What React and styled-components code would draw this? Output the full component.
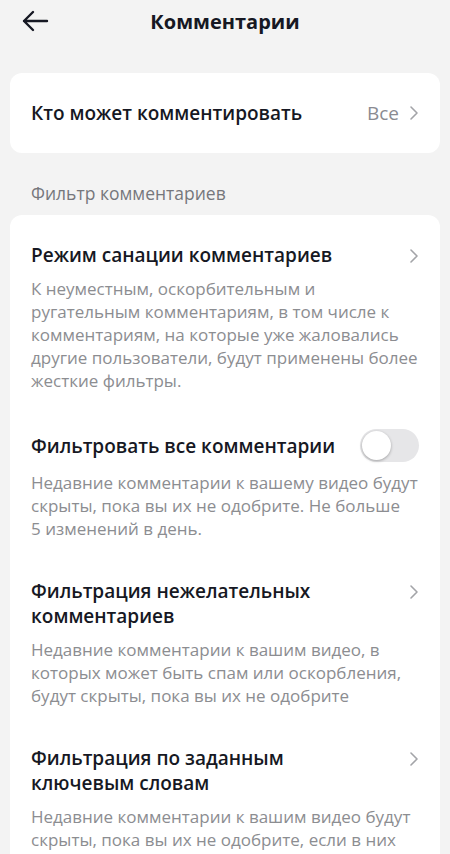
import React from 'react';
import styled, { createGlobalStyle } from 'styled-components';

const GlobalStyle = createGlobalStyle`
    body {
        margin: 0;
        background: #f3f3f3;
        font-family: 'Open Sans', 'Noto Sans', sans-serif;
        -webkit-font-smoothing: antialiased;
    }
`;

const Page = styled.div`
    width: 450px;
    height: 854px;
    background: #f3f3f3;
    overflow: hidden;
`;

const Header = styled.div`
    height: 42px;
    display: flex;
    align-items: center;
    justify-content: center;
    position: relative;
`;

const BackButton = styled.div`
    position: absolute;
    left: 20px;
    top: 8px;
    width: 30px;
    height: 26px;
    display: flex;
    align-items: center;
    justify-content: center;
`;

const Title = styled.h1`
    margin: 0;
    font-size: 20px;
    font-weight: 700;
    color: #161823;
`;

const Content = styled.div`
    padding: 31px 10px 0;
    display: flex;
    flex-direction: column;
`;

const Card = styled.div`
    background: #fff;
    border-radius: 12px;
    padding: ${props => props.padding || '0 21px'};
`;

const Row = styled.div`
    height: 80px;
    display: flex;
    align-items: center;
    justify-content: space-between;
`;

const RowLabel = styled.span`
    font-size: 19px;
    font-weight: 600;
    color: #161823;
`;

const RowValue = styled.span`
    display: flex;
    align-items: center;
    gap: 10px;
    font-size: 19px;
    color: #8a8b91;
`;

const SectionLabel = styled.div`
    padding: 28px 21px 10px;
    font-size: 17.5px;
    color: #76777c;
`;

const Item = styled.div`
    padding: 20px 0 19px;
`;

const ItemHead = styled.div`
    display: flex;
    align-items: ${props => props.center ? 'center' : 'flex-start'};
    justify-content: space-between;
    gap: 20px;
`;

const ItemTitle = styled.div`
    font-size: 19px;
    line-height: 25px;
    font-weight: 600;
    color: #161823;
    max-width: 330px;
`;

const ItemText = styled.p`
    margin: 9px 0 0;
    font-size: 17px;
    line-height: 23px;
    color: #8c8d91;
`;

const ChevronBox = styled.span`
    display: flex;
    align-items: center;
    height: 25px;
    flex-shrink: 0;
`;

const Toggle = styled.div`
    width: 59px;
    height: 33px;
    border-radius: 17px;
    background: #e6e6e8;
    flex-shrink: 0;
    position: relative;
    margin-top: -2px;
`;

const Knob = styled.div`
    position: absolute;
    left: 2px;
    top: 2px;
    width: 29px;
    height: 29px;
    border-radius: 50%;
    background: #fff;
    box-shadow: 0 1px 3px rgba(0, 0, 0, 0.3);
`;

const Chevron = () => (
    <svg width="10" height="16" viewBox="0 0 10 16" fill="none">
        <path d="M2 2l6 6-6 6" stroke="#a3a4a8" strokeWidth="1.6" strokeLinecap="round" strokeLinejoin="round" />
    </svg>
);

const items = [
    {
        title: 'Режим санации комментариев',
        text: 'К неуместным, оскорбительным и ругательным комментариям, в том числе к комментариям, на которые уже жаловались другие пользователи, будут применены более жесткие фильтры.',
    },
    {
        title: 'Фильтровать все комментарии',
        text: 'Недавние комментарии к вашему видео будут скрыты, пока вы их не одобрите. Не больше 5\u00a0изменений в день.',
        toggle: true,
    },
    {
        title: 'Фильтрация нежелательных комментариев',
        text: 'Недавние комментарии к вашим видео, в которых может быть спам или оскорбления, будут скрыты, пока вы их не одобрите',
    },
    {
        title: 'Фильтрация по заданным ключевым словам',
        text: 'Недавние комментарии к вашим видео будут скрыты, пока вы их не одобрите, если в них есть заданные вами ключевые слова.',
    },
];

const App = () => (
    <Page>
        <GlobalStyle />
        <Header>
            <BackButton>
                <svg width="28" height="22" viewBox="0 0 28 22" fill="none">
                    <path d="M26 11H3M12 2l-9 9 9 9" stroke="#161823" strokeWidth="2.4" strokeLinecap="round" strokeLinejoin="round" />
                </svg>
            </BackButton>
            <Title>Комментарии</Title>
        </Header>
        <Content>
            <Card>
                <Row>
                    <RowLabel>Кто может комментировать</RowLabel>
                    <RowValue>Все <Chevron /></RowValue>
                </Row>
            </Card>
            <SectionLabel>Фильтр комментариев</SectionLabel>
            <Card padding="8px 21px 0">
                {items.map(item => (
                    <Item key={item.title}>
                        <ItemHead center={item.toggle}>
                            <ItemTitle>{item.title}</ItemTitle>
                            {item.toggle
                                ? <Toggle><Knob /></Toggle>
                                : <ChevronBox><Chevron /></ChevronBox>}
                        </ItemHead>
                        <ItemText>{item.text}</ItemText>
                    </Item>
                ))}
            </Card>
        </Content>
    </Page>
);

export default App;
